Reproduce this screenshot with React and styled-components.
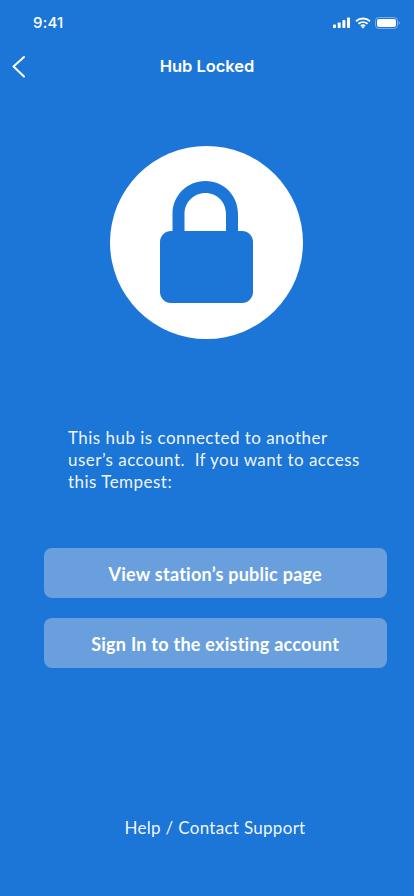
import React from "react";
import styled, { createGlobalStyle } from "styled-components";

const Global = createGlobalStyle`
  html, body { margin: 0; padding: 0; background: #1c76d8; }
  * { box-sizing: border-box; }
`;
const Screen = styled.div`
  width: 414px; height: 896px; background: #1c76d8; color: #fff;
  display: flex; flex-direction: column; font-family: Lato, "Liberation Sans", sans-serif; overflow: hidden;
`;
const StatusBar = styled.div`
  height: 44px; display: flex; align-items: center; justify-content: space-between;
  padding: 2px 14px 0 33px; flex: none;
`;
const Time = styled.span`
  font: 500 15px/20px Inter, sans-serif; letter-spacing: 0.2px; color: #fff;
`;
const StatusIcons = styled.div`display: flex; align-items: center; gap: 4px;`;
const Nav = styled.div`
  height: 44px; display: flex; align-items: center; justify-content: center; position: relative; flex: none;
`;
const Back = styled.svg`position: absolute; left: 11.5px; top: 11px;`;
const Title = styled.h1`
  margin: 0; font: 600 16.5px/20px Inter, sans-serif; color: #fff; letter-spacing: -0.05px;
`;
const Badge = styled.div`
  width: 193px; height: 193px; border-radius: 50%; background: #fff; margin: 58px 0 0 110px; flex: none;
  display: flex; align-items: center; justify-content: center;
`;
const LockIcon = styled.svg`margin-top: -1px;`;
const Message = styled.p`
  margin: 88px 0 0 68px; width: 300px; font-size: 17px; line-height: 22px; font-weight: 400; color: rgba(255, 255, 255, 0.95);
  letter-spacing: 0.47px;
`;
const Actions = styled.div`
  margin: 55px 0 0 44px; width: 342.5px; display: flex; flex-direction: column; gap: 20px;
`;
const Action = styled.button`
  height: 50px; border: 0; border-radius: 8px; background: #6a9fdd; color: #fff; padding: 1px 0 0;
  font-family: Lato, "Liberation Sans", sans-serif; font-size: 18px; font-weight: 700; letter-spacing: 0.25px;
`;
const Help = styled.a`
  margin-top: 149px; padding-left: 16px; text-align: center; font-size: 17px; line-height: 22px; color: rgba(255, 255, 255, 0.95); letter-spacing: 0.3px;
`;

export default function App() {
  return (
    <Screen>
      <Global />
      <StatusBar>
        <Time>9:41</Time>
        <StatusIcons>
          <svg width="18" height="12" viewBox="0 0 18 12" fill="#fff">
            <rect x="0" y="7.5" width="3" height="3.5" rx="0.8" />
            <rect x="4.7" y="5.5" width="3" height="5.5" rx="0.8" />
            <rect x="9.4" y="3" width="3" height="8" rx="0.8" />
            <rect x="14" y="0.5" width="3" height="10.5" rx="0.8" />
          </svg>
          <svg width="16" height="12" viewBox="0 0 16 12" fill="none" stroke="#fff" strokeWidth="1.9">
            <path d="M1 4.2C5 .6 11 .6 15 4.2" />
            <path d="M3.4 6.8c2.7-2.3 6.5-2.3 9.2 0" />
            <path d="M5.9 9c1.3-1 2.9-1 4.2 0" />
            <path d="M8 11.6 6.4 9.9c.9-.6 2.3-.6 3.2 0z" fill="#fff" stroke="none" />
          </svg>
          <svg width="25" height="12" viewBox="0 0 25 12" fill="none">
            <rect x="0.5" y="0.5" width="22" height="11" rx="3.2" stroke="#fff" strokeOpacity="0.4" />
            <rect x="2" y="2" width="19" height="8" rx="2" fill="#fff" />
            <path d="M23.6 4.2c.8.3 1.2 1 1.2 1.8s-.4 1.5-1.2 1.8z" fill="#fff" fillOpacity="0.45" />
          </svg>
        </StatusIcons>
      </StatusBar>
      <Nav>
        <Back width="14" height="24" viewBox="0 0 14 24" fill="none" stroke="#fff" strokeWidth="2" strokeLinecap="round" strokeLinejoin="round">
          <path d="M12 2 1.5 11.5 12 21.5" />
        </Back>
        <Title>Hub Locked</Title>
      </Nav>
      <Badge>
        <LockIcon width="93" height="122" viewBox="0 0 93 122" fill="#1c76d8">
          <path fillRule="evenodd" d="M12.5 50V33C12.5 14.5 27 0 45.5 0S78 14.500 78 33v17H66V33c0-12-9-21-20.500-21S24.500 21 24.500 33v17z" />
          <rect x="0" y="50" width="93" height="72" rx="11" />
        </LockIcon>
      </Badge>
      <Message>This hub is connected to another user’s account.&nbsp; If you want to access this Tempest:</Message>
      <Actions>
        <Action>View station’s public page</Action>
        <Action>Sign In to the existing account</Action>
      </Actions>
      <Help>Help / Contact Support</Help>
    </Screen>
  );
}
